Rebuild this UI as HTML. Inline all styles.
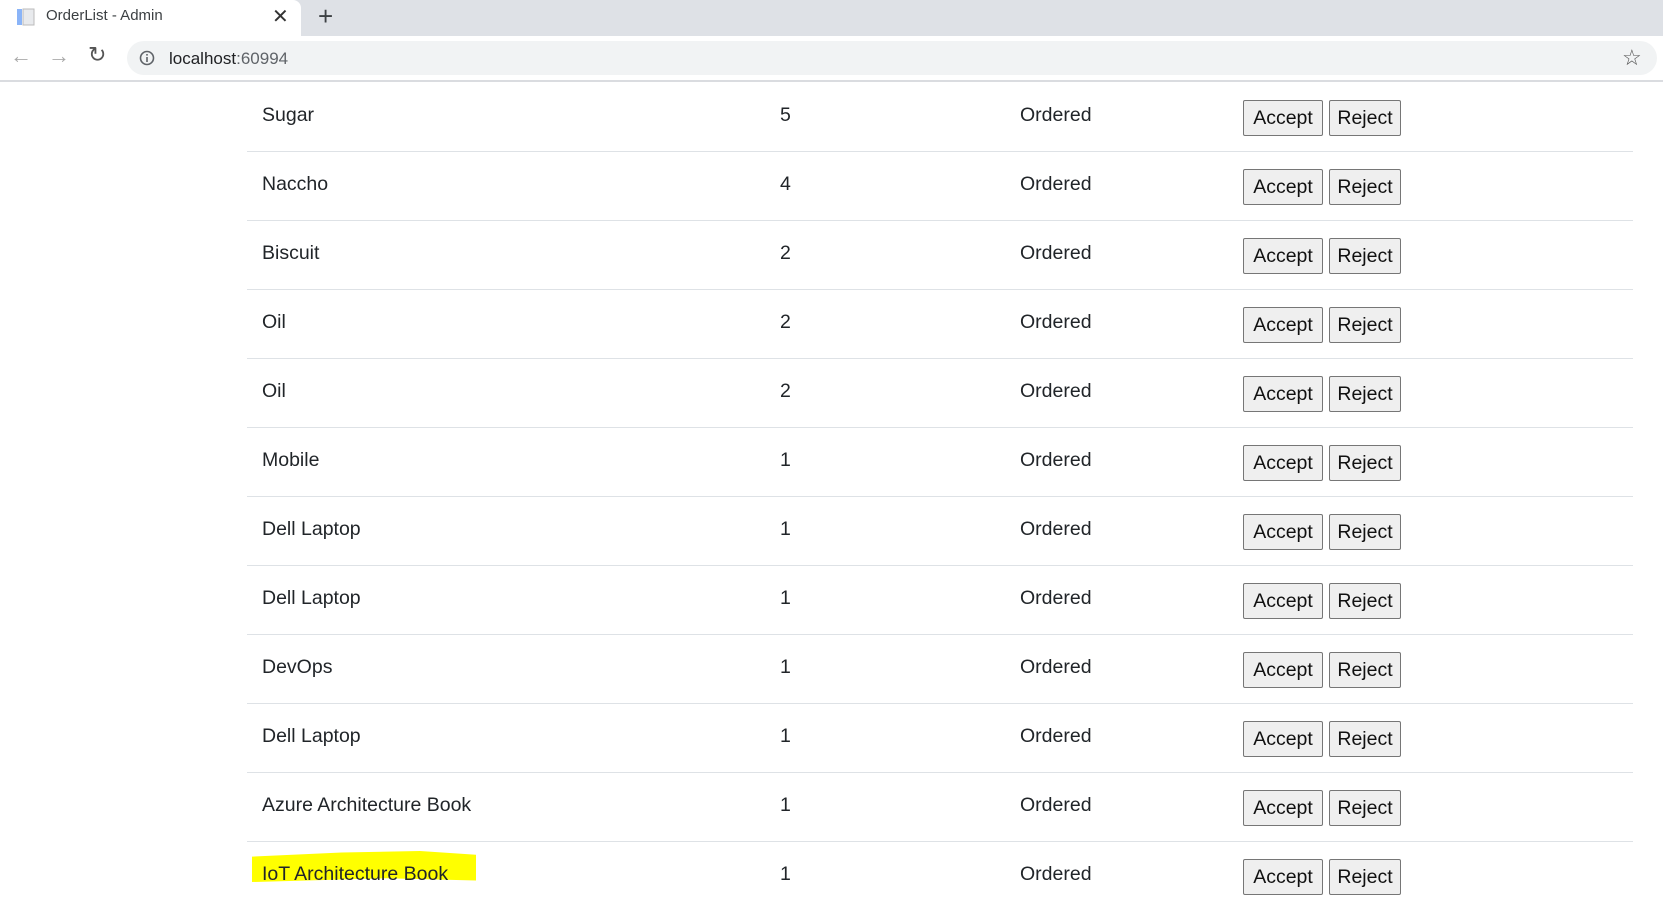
<!DOCTYPE html>
<html><head><meta charset="utf-8"><style>
*{margin:0;padding:0;box-sizing:border-box}
body{width:1663px;height:921px;overflow:hidden;background:#fff;font-family:"Liberation Sans",sans-serif;position:relative;color:#212529}
.tabbar{position:absolute;left:0;top:0;width:1663px;height:36px;background:#dee1e6}
.tab{position:absolute;left:0;top:0;width:301px;height:36px;background:#fff;border-radius:0 8px 0 0}
.tab .t{position:absolute;left:46px;top:7px;font-size:15px;color:#3c4043}
.tab .x{position:absolute;left:272px;top:4px;font-size:20px;color:#333}
.plus{position:absolute;left:318px;top:1px;font-size:26px;color:#3c4043}
.bar{position:absolute;left:0;top:36px;width:1663px;height:46px;background:#fff;border-bottom:2px solid #dadce0}
.pill{position:absolute;left:127px;top:5px;width:1530px;height:34px;background:#f1f3f4;border-radius:17px}
.url{position:absolute;left:42px;top:8px;font-size:17px;color:#202124}
.url span{color:#5f6368}
.row{position:absolute;left:247px;width:1386px;height:69px;border-bottom:1px solid #dee2e6}
.row div{position:absolute;top:21px;font-size:19.5px}
.n{left:15px}.q{left:533px}.s{left:773px}
.b{position:absolute;top:17px;height:36px;background:#efefef;border:1px solid #767676;border-radius:2px;font-size:19.5px;line-height:34px;text-align:center;color:#111}
.a{left:996px;width:80px}.r{left:1082px;width:72px}
.hl{position:absolute;left:252px;top:851px;width:224px;height:31px;background:#ffff00;clip-path:polygon(0 18%,40% 5%,75% 0,100% 12%,100% 95%,60% 88%,0 100%)}
</style></head><body>
<div class="tabbar"><div class="tab">
<svg style="position:absolute;left:16px;top:7px" width="20" height="20"><rect x="1" y="2" width="5" height="16" fill="#8ab4f8"/><rect x="7" y="2" width="11" height="16" fill="#e8eaed" stroke="#bbb"/></svg>
<span class="t">OrderList - Admin</span><span class="x">✕</span></div><span class="plus">+</span></div>
<div class="bar">
<span style="position:absolute;left:10px;top:7px;font-size:22px;color:#aaa">←</span>
<span style="position:absolute;left:48px;top:7px;font-size:22px;color:#aaa">→</span>
<span style="position:absolute;left:88px;top:6px;font-size:22px;color:#555">↻</span>
<div class="pill"><svg style="position:absolute;left:12px;top:9px" width="16" height="16"><circle cx="8" cy="8" r="6.5" fill="none" stroke="#5f6368" stroke-width="1.6"/><rect x="7.2" y="7" width="1.6" height="5" fill="#5f6368"/><rect x="7.2" y="4" width="1.6" height="1.6" fill="#5f6368"/></svg>
<span class="url">localhost<span>:60994</span></span>
<span style="position:absolute;left:1495px;top:4px;font-size:22px;color:#555">☆</span></div>
</div>
<div class="hl"></div>
<div class="row" style="top:83px"><div class="n">Sugar</div><div class="q">5</div><div class="s">Ordered</div><span class="b a">Accept</span><span class="b r">Reject</span></div>
<div class="row" style="top:152px"><div class="n">Naccho</div><div class="q">4</div><div class="s">Ordered</div><span class="b a">Accept</span><span class="b r">Reject</span></div>
<div class="row" style="top:221px"><div class="n">Biscuit</div><div class="q">2</div><div class="s">Ordered</div><span class="b a">Accept</span><span class="b r">Reject</span></div>
<div class="row" style="top:290px"><div class="n">Oil</div><div class="q">2</div><div class="s">Ordered</div><span class="b a">Accept</span><span class="b r">Reject</span></div>
<div class="row" style="top:359px"><div class="n">Oil</div><div class="q">2</div><div class="s">Ordered</div><span class="b a">Accept</span><span class="b r">Reject</span></div>
<div class="row" style="top:428px"><div class="n">Mobile</div><div class="q">1</div><div class="s">Ordered</div><span class="b a">Accept</span><span class="b r">Reject</span></div>
<div class="row" style="top:497px"><div class="n">Dell Laptop</div><div class="q">1</div><div class="s">Ordered</div><span class="b a">Accept</span><span class="b r">Reject</span></div>
<div class="row" style="top:566px"><div class="n">Dell Laptop</div><div class="q">1</div><div class="s">Ordered</div><span class="b a">Accept</span><span class="b r">Reject</span></div>
<div class="row" style="top:635px"><div class="n">DevOps</div><div class="q">1</div><div class="s">Ordered</div><span class="b a">Accept</span><span class="b r">Reject</span></div>
<div class="row" style="top:704px"><div class="n">Dell Laptop</div><div class="q">1</div><div class="s">Ordered</div><span class="b a">Accept</span><span class="b r">Reject</span></div>
<div class="row" style="top:773px"><div class="n">Azure Architecture Book</div><div class="q">1</div><div class="s">Ordered</div><span class="b a">Accept</span><span class="b r">Reject</span></div>
<div class="row" style="top:842px;border-bottom:none"><div class="n">IoT Architecture Book</div><div class="q">1</div><div class="s">Ordered</div><span class="b a">Accept</span><span class="b r">Reject</span></div>
</body></html>
